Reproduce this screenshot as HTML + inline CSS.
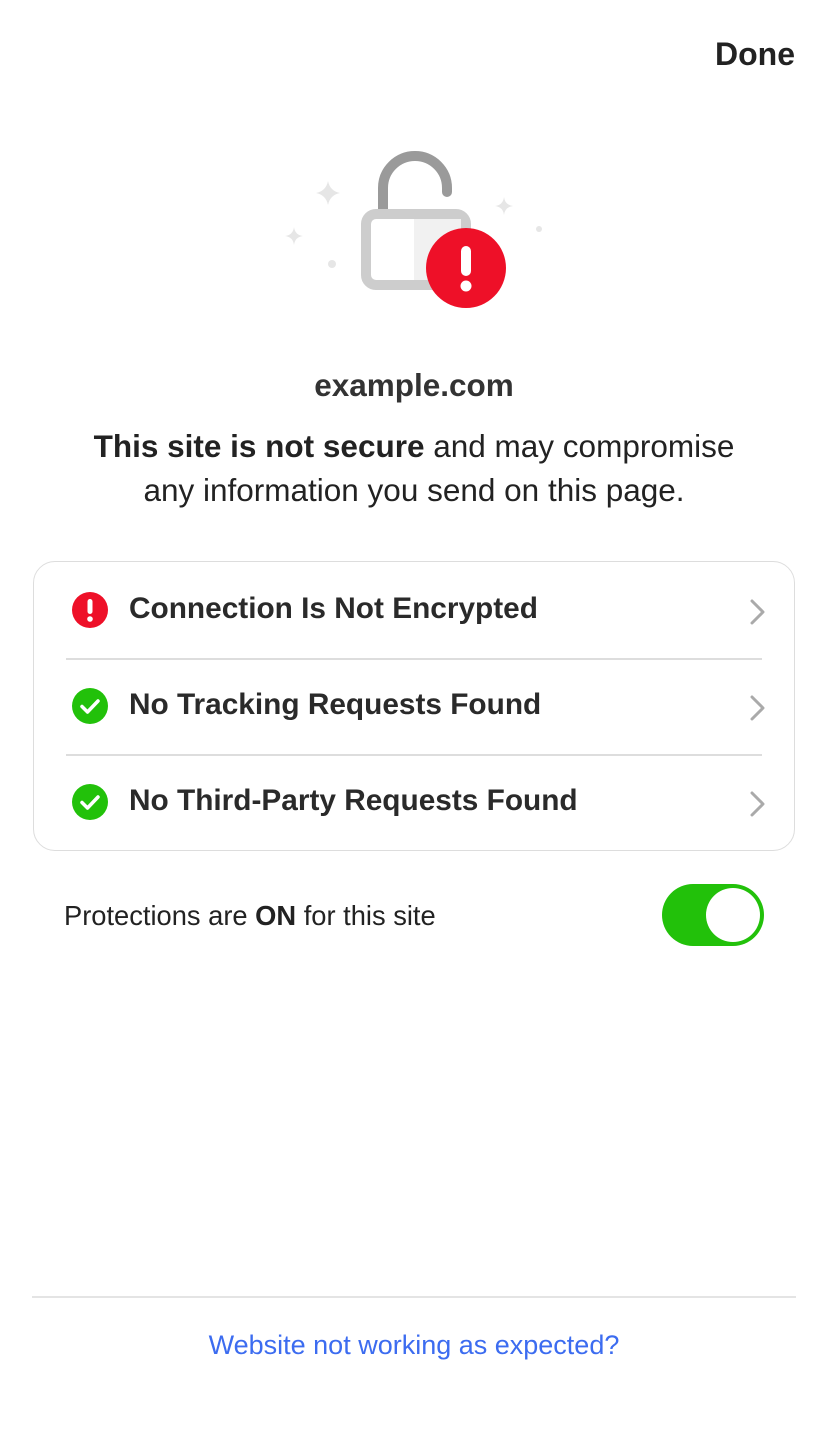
<!DOCTYPE html>
<html><head><meta charset="utf-8"><style>
body{margin:0;width:828px;height:1430px;background:#fff;font-family:"Liberation Sans",sans-serif;color:#222;position:relative;overflow:hidden}
.abs{position:absolute}
.done{right:33px;top:36px;font-size:32px;font-weight:bold;color:#222}
.domain{left:0;width:828px;text-align:center;top:367px;font-size:31.5px;font-weight:bold;color:#333}
.msg{left:0;width:828px;text-align:center;top:424px;font-size:31.5px;line-height:44px;color:#222}
.card{left:33px;top:561px;width:760px;height:288px;border:1.5px solid #ddd;border-radius:22px}
.row{position:absolute;left:0;width:760px;height:96px}
.row .t{position:absolute;left:95px;top:30px;font-size:29.8px;font-weight:bold;color:#2a2a2a}
.row svg.i{position:absolute;left:38px;top:30px}
.row svg.c{position:absolute;left:714px;top:36px}
.div{position:absolute;left:32px;width:696px;height:1.5px;background:#ddd}
.prot{left:64px;top:900px;font-size:27.3px;color:#222}
.tog{left:662px;top:884px;width:102px;height:62px;border-radius:31px;background:#22c10a}
.knob{position:absolute;right:4px;top:4px;width:54px;height:54px;border-radius:50%;background:#fff}
.hr{left:32px;top:1296px;width:764px;height:1.5px;background:#e4e4e4}
.link{left:0;width:828px;text-align:center;top:1330px;font-size:27px;color:#3c6cf0}
</style></head><body>
<div class="abs done">Done</div>
<svg class="abs" style="left:0;top:0" width="828" height="330">
<path d="M383 210 V188 A32 32 0 0 1 447 188 V192" fill="none" stroke="#9a9a9a" stroke-width="10" stroke-linecap="round"/>
<rect x="366" y="214" width="100" height="71" rx="10" fill="#fff" stroke="#cdcdcd" stroke-width="10"/>
<rect x="414" y="219" width="47" height="61" fill="#f1f1f1"/>
<circle cx="466" cy="268" r="40" fill="#ee1028"/>
<rect x="461" y="246" width="10" height="30" rx="5" fill="#fff"/>
<circle cx="466" cy="286" r="5.5" fill="#fff"/>
<g fill="#e6e6e6">
<path d="M328 181 Q330 191 340 193 Q330 195 328 205 Q326 195 316 193 Q326 191 328 181Z"/>
<path d="M294 227 Q295 235 303 236 Q295 237 294 245 Q293 237 285 236 Q293 235 294 227Z"/>
<path d="M504 197 Q505 205 513 206 Q505 207 504 215 Q503 207 495 206 Q503 205 504 197Z"/>
<circle cx="332" cy="264" r="4"/><circle cx="539" cy="229" r="3"/>
</g>
</svg>
<div class="abs domain">example.com</div>
<div class="abs msg"><b>This site is not secure</b> and may compromise<br>any information you send on this page.</div>
<div class="abs card">
<div class="row" style="top:0">
<svg class="i" width="36" height="36"><circle cx="18" cy="18" r="18" fill="#ee1028"/><rect x="15.5" y="7" width="5" height="15" rx="2.5" fill="#fff"/><circle cx="18" cy="27" r="2.8" fill="#fff"/></svg>
<div class="t">Connection Is Not Encrypted</div>
<svg class="c" width="20" height="28"><path d="M4 3 L15 14 L4 25" fill="none" stroke="#aaa" stroke-width="3" stroke-linecap="round" stroke-linejoin="round"/></svg>
</div>
<div class="div" style="top:96px"></div>
<div class="row" style="top:96px">
<svg class="i" width="36" height="36"><circle cx="18" cy="18" r="18" fill="#22c10a"/><path d="M10 18.5 L15.5 24 L26 13" fill="none" stroke="#fff" stroke-width="3.5" stroke-linecap="round" stroke-linejoin="round"/></svg>
<div class="t">No Tracking Requests Found</div>
<svg class="c" width="20" height="28"><path d="M4 3 L15 14 L4 25" fill="none" stroke="#aaa" stroke-width="3" stroke-linecap="round" stroke-linejoin="round"/></svg>
</div>
<div class="div" style="top:192px"></div>
<div class="row" style="top:192px">
<svg class="i" width="36" height="36"><circle cx="18" cy="18" r="18" fill="#22c10a"/><path d="M10 18.5 L15.5 24 L26 13" fill="none" stroke="#fff" stroke-width="3.5" stroke-linecap="round" stroke-linejoin="round"/></svg>
<div class="t">No Third-Party Requests Found</div>
<svg class="c" width="20" height="28"><path d="M4 3 L15 14 L4 25" fill="none" stroke="#aaa" stroke-width="3" stroke-linecap="round" stroke-linejoin="round"/></svg>
</div>
</div>
<div class="abs prot">Protections are <b>ON</b> for this site</div>
<div class="abs tog"><div class="knob"></div></div>
<div class="abs hr"></div>
<div class="abs link">Website not working as expected?</div>
</body></html>
